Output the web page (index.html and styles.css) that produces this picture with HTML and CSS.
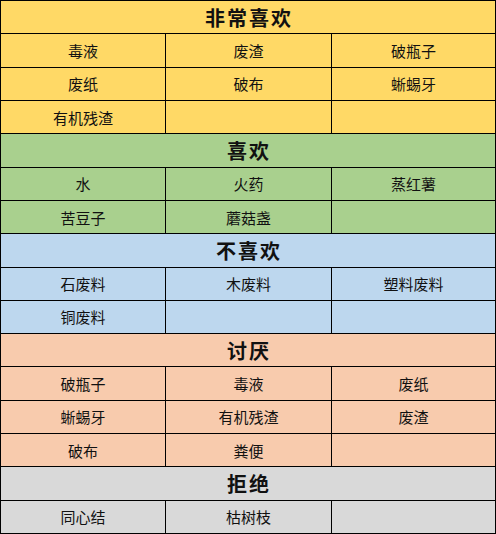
FILE: index.html
```html
<!DOCTYPE html>
<html lang="zh">
<head>
<meta charset="utf-8">
<link rel="stylesheet" href="styles.css">
</head>
<body>
<div class="sheet">
  <div class="head yellow">非常喜欢</div>
  <div class="cell yellow">毒液</div><div class="cell yellow">废渣</div><div class="cell yellow">破瓶子</div>
  <div class="cell yellow">废纸</div><div class="cell yellow">破布</div><div class="cell yellow">蜥蜴牙</div>
  <div class="cell yellow">有机残渣</div><div class="cell yellow"></div><div class="cell yellow"></div>

  <div class="head green">喜欢</div>
  <div class="cell green">水</div><div class="cell green">火药</div><div class="cell green">蒸红薯</div>
  <div class="cell green">苦豆子</div><div class="cell green">蘑菇盏</div><div class="cell green"></div>

  <div class="head blue">不喜欢</div>
  <div class="cell blue">石废料</div><div class="cell blue">木废料</div><div class="cell blue">塑料废料</div>
  <div class="cell blue">铜废料</div><div class="cell blue"></div><div class="cell blue"></div>

  <div class="head peach">讨厌</div>
  <div class="cell peach">破瓶子</div><div class="cell peach">毒液</div><div class="cell peach">废纸</div>
  <div class="cell peach">蜥蜴牙</div><div class="cell peach">有机残渣</div><div class="cell peach">废渣</div>
  <div class="cell peach">破布</div><div class="cell peach">粪便</div><div class="cell peach"></div>

  <div class="head gray">拒绝</div>
  <div class="cell gray">同心结</div><div class="cell gray">枯树枝</div><div class="cell gray"></div>
</div>
</body>
</html>
```

FILE: styles.css
```css
html, body {
  margin: 0;
  padding: 0;
  background: #ffffff;
}
.sheet {
  box-sizing: border-box;
  width: 496px;
  height: 534px;
  display: grid;
  grid-template-columns: 164px 165px 163px;
  grid-template-rows: repeat(16, 1fr);
  gap: 1px;
  padding: 1px;
  background: #000000;
  font-family: "Noto Sans CJK SC", "Noto Sans", sans-serif;
  color: #111111;
}
.head {
  grid-column: 1 / -1;
  display: flex;
  align-items: center;
  justify-content: center;
  font-size: 20px;
  font-weight: 700;
  letter-spacing: 2px;
  text-indent: 2px;
}
.cell {
  display: flex;
  align-items: center;
  justify-content: center;
  font-size: 15px;
}
.yellow { background: #ffd966; }
.green { background: #a9d08e; }
.blue { background: #bdd7ee; }
.peach { background: #f8cbad; }
.gray { background: #d9d9d9; }
```
